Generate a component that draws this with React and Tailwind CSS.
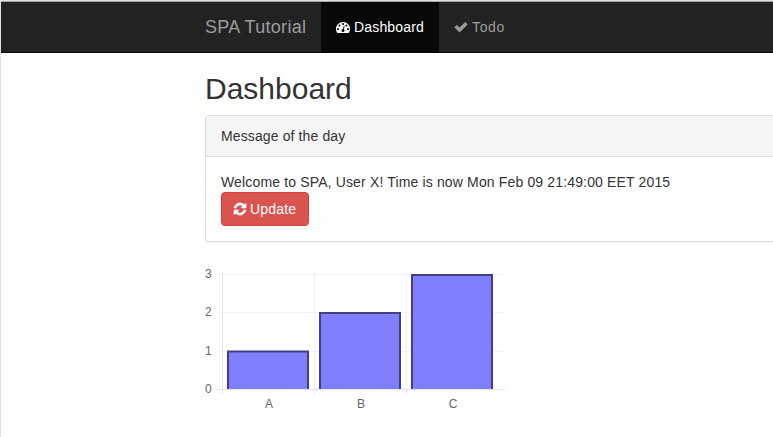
const ICONS = {
  dashboard:
    "M384 1152q0-53-37.5-90.5t-90.5-37.5-90.5 37.5-37.5 90.5 37.5 90.5 90.5 37.5 90.5-37.5 37.5-90.5zm192-448q0-53-37.5-90.5t-90.5-37.5-90.5 37.5-37.5 90.5 37.5 90.5 90.5 37.5 90.5-37.5 37.5-90.5zm428 481l101-382q6-26-7.5-48.5t-38.5-29.5-48 6.5-30 39.5l-101 382q-60 5-107 43.5t-63 98.5q-20 77 20 146t117 89 146-20 89-117q16-60-6-117t-72-91zm660-33q0-53-37.5-90.5t-90.5-37.5-90.5 37.5-37.5 90.5 37.5 90.5 90.5 37.5 90.5-37.5 37.5-90.5zm-640-640q0-53-37.5-90.5t-90.5-37.5-90.5 37.5-37.5 90.5 37.5 90.5 90.5 37.5 90.5-37.5 37.5-90.5zm448 192q0-53-37.5-90.5t-90.5-37.5-90.5 37.5-37.5 90.5 37.5 90.5 90.5 37.5 90.5-37.5 37.5-90.5zm320 448q0 261-141 483-19 29-54 29h-1402q-35 0-54-29-141-221-141-483 0-182 71-348t191-286 286-191 348-71 348 71 286 191 191 286 71 348z",
  check:
    "M1671 566q0 40-28 68l-724 724-136 136q-28 28-68 28t-68-28l-136-136-362-362q-28-28-28-68t28-68l136-136q28-28 68-28t68 28l294 295 656-657q28-28 68-28t68 28l136 136q28 28 28 68z",
  refresh:
    "M1639 1056q0 5-1 7-64 268-268 434.5t-478 166.5q-146 0-282.5-55t-243.5-157l-129 129q-19 19-45 19t-45-19-19-45v-448q0-26 19-45t45-19h448q26 0 45 19t19 45-19 45l-137 137q71 66 161 102t187 36q134 0 250-65t186-179q11-17 53-117 8-23 30-23h192q13 0 22.5 9.5t9.5 22.5zm25-800v448q0 26-19 45t-45 19h-448q-26 0-45-19t-19-45 19-45l138-138q-148-137-349-137-134 0-250 65t-186 179q-11 17-53 117-8 23-30 23h-199q-13 0-22.5-9.5t-9.5-22.5v-7q65-268 270-434.5t480-166.5q146 0 284 55.5t245 156.5l130-129q19-19 45-19t45 19 19 45z",
};

function Icon({ name, className = "" }) {
  return (
    <svg viewBox="0 0 1792 1792" className={`size-[14px] shrink-0 fill-current ${className}`} aria-hidden="true">
      <path d={ICONS[name]} />
    </svg>
  );
}

function Navbar() {
  return (
    <nav className="flex h-[51px] border-b border-[#080808] bg-[#222] pl-[204px] leading-5 text-[#9d9d9d]">
      <a className="flex w-[116px] items-center text-[18px] tracking-[0.3px] whitespace-nowrap">SPA Tutorial</a>
      <a className="flex w-[118px] items-center gap-1 bg-[#080808] pl-[15px] text-white">
        <Icon name="dashboard" />
        <span className="tracking-[0.17px]">Dashboard</span>
      </a>
      <a className="flex items-center gap-1 pl-[15px]">
        <Icon name="check" className="stroke-current [stroke-width:90]" />
        <span className="tracking-[0.65px]">Todo</span>
      </a>
    </nav>
  );
}

function MessagePanel() {
  return (
    <section className="w-[1140px] rounded-[4px] border border-[#ddd] bg-white shadow-[0_1px_1px_rgba(0,0,0,0.05)]">
      <header className="rounded-t-[3px] border-b border-[#ddd] bg-[#f5f5f5] px-[15px] py-[10px]">
        <span className="tracking-[0.12px]">Message of the day</span>
      </header>
      <div className="p-[15px]">
        <p className="tracking-[0.15px]">Welcome to SPA, User X! Time is now Mon Feb 09 21:49:00 EET 2015</p>
        <button className="flex h-[34px] w-[88px] items-center gap-[3px] rounded-[4px] border border-[#d43f3a] bg-[#d9534f] pl-[11px] text-white">
          <Icon name="refresh" className="stroke-current [stroke-width:90]" />
          <span className="tracking-[0.17px]">Update</span>
        </button>
      </div>
    </section>
  );
}

const GRID_ROWS = [
  { label: "3", y: 3.5 },
  { label: "2", y: 41.5 },
  { label: "1", y: 80.5 },
];
const BARS = [
  { label: "A", x: 23, top: 80.5 },
  { label: "B", x: 115, top: 42 },
  { label: "C", x: 207, top: 4 },
];

function BarChart() {
  return (
    <svg width="302" height="155" viewBox="0 -10 302 155" className="block fill-[#666] text-[12px]">
      {GRID_ROWS.map((r) => (
        <path key={r.label} d={`M12 ${r.y}H300`} stroke="#f2f2f2" />
      ))}
      <path d="M109.5 0V123M201.5 0V123" stroke="#f2f2f2" />
      <path d="M109.5 119V123M201.5 119V123" stroke="#e5e5e5" />
      <path d="M17.5 0V123M12 118.5H300" stroke="#e5e5e5" />
      {[...GRID_ROWS, { label: "0", y: 118.5 }].map((r) => (
        <text key={r.label} x="6.7" y={r.y + 3.5} textAnchor="end">
          {r.label}
        </text>
      ))}
      {BARS.map((b) => (
        <g key={b.label}>
          <path
            d={`M${b.x} 118V${b.top}H${b.x + 80}V118`}
            fill="#8080ff"
            stroke="#404080"
            strokeWidth="2"
          />
          <text x={b.x + 41} y="137" textAnchor="middle">
            {b.label}
          </text>
        </g>
      ))}
    </svg>
  );
}

export default function App() {
  return (
    <div className="h-[437px] w-full overflow-hidden border-t border-l border-[#dfdfdf] bg-white font-['Liberation_Sans',Arial,sans-serif] text-[14px] leading-5 text-[#333]">
      <div className="h-px bg-[#a5a8a8]" />
      <Navbar />
      <main className="pl-[204px]">
        <h2 className="pt-[19px] pb-[10px] text-[30px] leading-[33px]">Dashboard</h2>
        <MessagePanel />
        <div className="pt-[19px]">
          <BarChart />
        </div>
      </main>
    </div>
  );
}
